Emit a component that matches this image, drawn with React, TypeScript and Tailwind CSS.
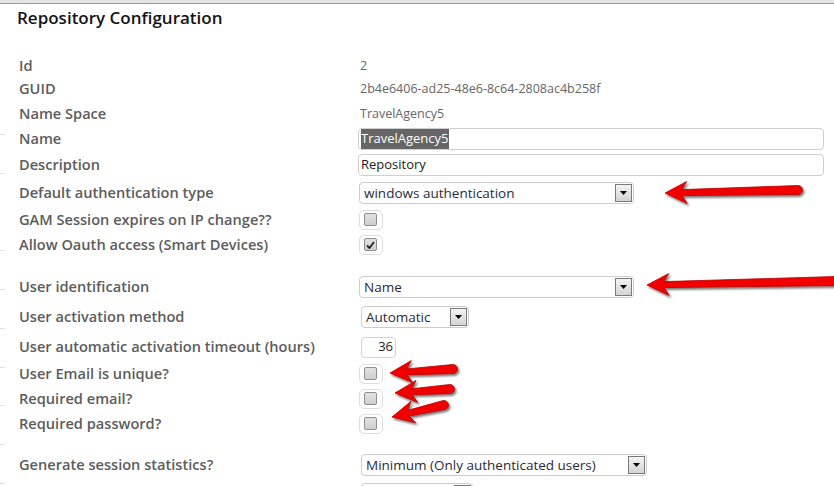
import React from "react";

type Pt = [number, number];

function arrowPath(tip: Pt, tail: Pt) {
  const dx = tail[0] - tip[0];
  const dy = tail[1] - tip[1];
  const len = Math.hypot(dx, dy);
  const ux = dx / len;
  const uy = dy / len;
  const nx = -uy;
  const ny = ux;
  const L = 22;
  const W = 11;
  const w1 = 3;
  const w2 = 4.5;
  const p = (a: number, b: number) => `${(tip[0] + ux * a + nx * b).toFixed(1)} ${(tip[1] + uy * a + ny * b).toFixed(1)}`;
  return [
    `M ${p(0, 0)}`,
    `L ${p(L, W)}`,
    `L ${p(L - 5, w1)}`,
    `L ${p(len, w2)}`,
    `A ${w2} ${w2} 0 0 0 ${p(len, -w2)}`,
    `L ${p(L - 5, -w1)}`,
    `L ${p(L, -W)}`,
    "Z",
  ].join(" ");
}

const arrows: [Pt, Pt][] = [
  [[665, 193], [798, 190]],
  [[647, 285], [836, 281]],
  [[390, 373], [453, 369]],
  [[395, 393], [450, 389]],
  [[392, 417], [444, 405]],
];

function Label({ children }: { children: React.ReactNode }) {
  return <div className="w-[340px] shrink-0 pl-[19px] text-[14.6px] font-semibold text-[#5c5c5c]">{children}</div>;
}

function Row({ h, label, children }: { h: string; label: string; children?: React.ReactNode }) {
  return (
    <div className={`flex items-center ${h}`}>
      <Label>{label}</Label>
      <div className="flex items-center">{children}</div>
    </div>
  );
}

function Value({ children }: { children: React.ReactNode }) {
  return <div className="pl-[20px] text-[12.5px] text-[#666]">{children}</div>;
}

function TextBox({ children }: { children: React.ReactNode }) {
  return (
    <div className="ml-[18px] flex h-[22px] w-[466px] items-center rounded-[4px] border border-[#cfcfcf] bg-white px-[2px] text-[13px] text-[#222]">
      {children}
    </div>
  );
}

function Select({ value, w, ml = "ml-[19px]" }: { value: string; w: string; ml?: string }) {
  return (
    <div className={`${ml} flex h-[22px] ${w} items-center justify-between rounded-[4px] border border-[#cdcdcd] bg-white pl-[4px] pr-[1px] text-[13.5px] text-[#2a2a3a]`}>
      <span>{value}</span>
      <span className="flex h-[18px] w-[17px] items-center justify-center border border-[#7a7a7a] bg-gradient-to-b from-[#f4f4f4] to-[#d4d4d4]">
        <svg width="7" height="4" viewBox="0 0 7 4">
          <path d="M0 0 H7 L3.5 4 Z" fill="#000" />
        </svg>
      </span>
    </div>
  );
}

function Check({ checked = false }: { checked?: boolean }) {
  return (
    <div className="ml-[19px] flex h-[20px] w-[24px] items-start justify-start rounded-[5px] border border-[#dedede] pl-[4px] pt-[2px]">
      <div className="flex h-[13px] w-[13px] items-center justify-center rounded-[2px] border border-[#8e8e8e] bg-gradient-to-b from-[#e2e2e2] to-[#cfcfcf]">
        {checked && (
          <svg width="9" height="8" viewBox="0 0 9 8">
            <path d="M1 4.5 L3.5 7 L8 1" stroke="#222" strokeWidth="1.8" fill="none" />
          </svg>
        )}
      </div>
    </div>
  );
}

export default function App() {
  return (
    <div className="relative h-[486px] w-[834px] overflow-hidden bg-white font-['Open_Sans',sans-serif]">
      <div className="h-[4px] border-b border-[#9a9a9a] bg-[#e4e4e4]" />

      <div className="flex">
        <div className="flex w-[5px] shrink-0 flex-col">
          <div className="h-[125px]" />
          <div className="h-[356px] bg-[repeating-linear-gradient(to_bottom,transparent_0px,transparent_5px,#e0e0e0_5px,#e0e0e0_6px,transparent_6px,transparent_38.75px)]" />
        </div>
        <div className="flex-1 -ml-[5px]">
          <div className="flex h-[28px] items-center pl-[17px] text-[17px] font-semibold text-[#141414]">Repository Configuration</div>
          <div className="h-[23px]" />

          <Row h="h-[22px]" label="Id"><Value>2</Value></Row>
          <Row h="h-[24px]" label="GUID"><Value>2b4e6406-ad25-48e6-8c64-2808ac4b258f</Value></Row>
          <Row h="h-[26px]" label="Name Space"><Value>TravelAgency5</Value></Row>
          <Row h="h-[24px]" label="Name">
            <TextBox>
              <span className="bg-[#666] text-white">TravelAgency5</span>
            </TextBox>
          </Row>
          <Row h="h-[28px]" label="Description"><TextBox>Repository</TextBox></Row>
          <Row h="h-[28px]" label="Default authentication type">
            <Select value="windows authentication" w="w-[275px]" />
          </Row>
          <Row h="h-[26px]" label="GAM Session expires on IP change??"><Check /></Row>
          <Row h="h-[24px]" label="Allow Oauth access (Smart Devices)"><Check checked /></Row>
          <div className="h-[16px]" />
          <Row h="h-[28px]" label="User identification">
            <Select value="Name" w="w-[275px]" />
          </Row>
          <Row h="h-[32px]" label="User activation method">
            <Select value="Automatic" w="w-[108px]" ml="ml-[21px]" />
          </Row>
          <Row h="h-[28px]" label="User automatic activation timeout (hours)">
            <div className="ml-[21px] flex h-[21px] w-[35px] items-center justify-end rounded-[4px] border border-[#d2d2d2] pr-[2px] text-[13px] text-[#222]">36</div>
          </Row>
          <Row h="h-[26px]" label="User Email is unique?"><Check /></Row>
          <Row h="h-[24px]" label="Required email?"><Check /></Row>
          <Row h="h-[26px]" label="Required password?"><Check /></Row>
          <div className="h-[14px]" />
          <Row h="h-[28px]" label="Generate session statistics?">
            <Select value="Minimum (Only authenticated users)" w="w-[286px]" ml="ml-[21px]" />
          </Row>
          <div className="flex h-[28px] items-start pl-[361px] pt-[4px]">
            <Select value="" w="w-[112px]" ml="ml-0" />
          </div>
        </div>
      </div>

      <svg className="pointer-events-none absolute inset-0" width="834" height="486" viewBox="0 0 834 486">
        <defs>
          <filter id="sh" x="-20%" y="-50%" width="140%" height="200%">
            <feDropShadow dx="1.5" dy="2" stdDeviation="1.2" floodColor="#000" floodOpacity="0.55" />
          </filter>
        </defs>
        {arrows.map(([tip, tail], i) => (
          <path key={i} d={arrowPath(tip, tail)} fill="#f20000" stroke="#b80000" strokeWidth="0.8" filter="url(#sh)" />
        ))}
      </svg>
    </div>
  );
}
